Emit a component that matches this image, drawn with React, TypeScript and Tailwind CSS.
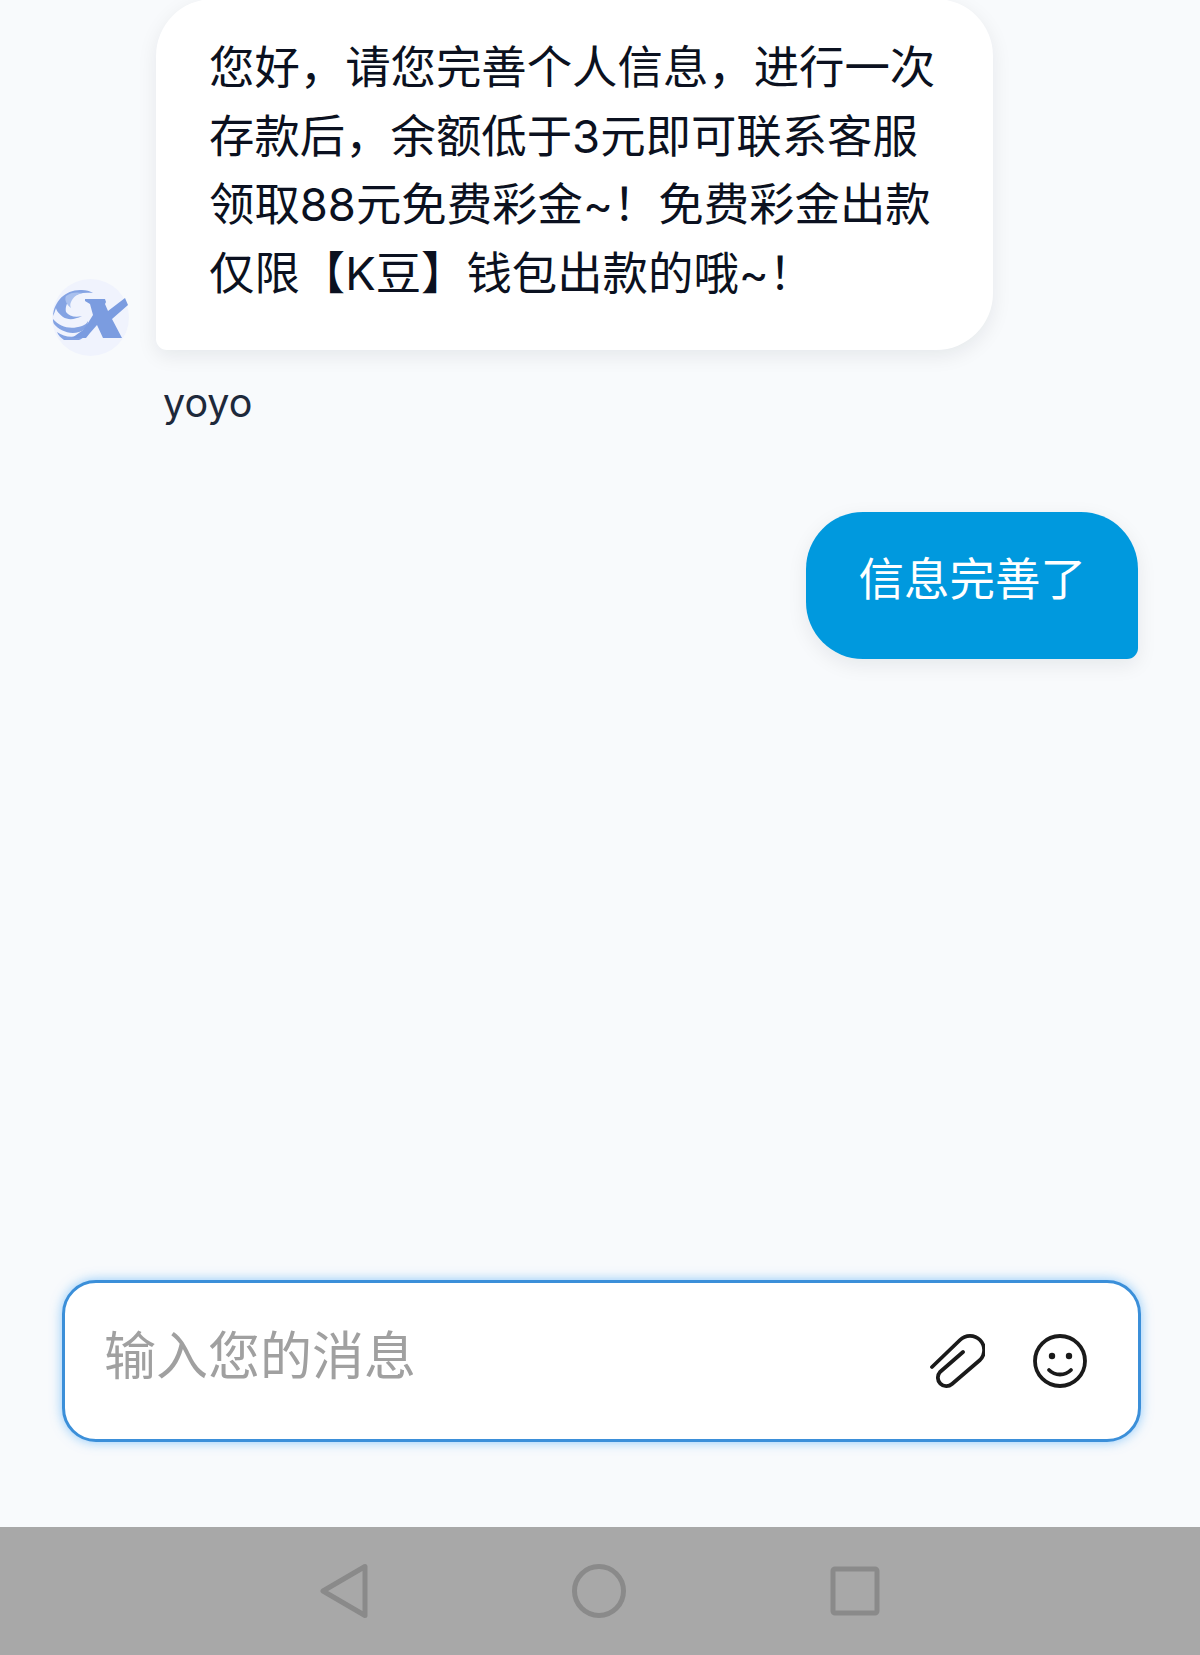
function Logo() {
  return (
    <svg viewBox="0 0 77 77" className="-mb-[6px] h-[77px] w-[77px] shrink-0" fill="none">
      <circle cx="38.5" cy="38.5" r="38.5" fill="#f0f3fd" />
      {/* wing */}
      <g fill="#84a3e3">
        <path d="M1 37C2 22 14 10 30 11c4 0 8 1 11 3-9-1-16 0-22 5-4 4-6 9-5 14 3 4 9 6 16 4-8 4-14 4-19 1-4-3-7-7-7-9-1 3-2 6-3 8z" />
        <path d="M14 17c5-4 11-4 17-3-6 1-10 4-12 9-1 2-1 4 0 6-4-3-7-8-5-12z" fill="#a9c0ee" />
        <path d="M1 40c7 8 17 11 29 7 3-1 5-3 6-5 0 5-3 9-9 11-10 3-20-2-25-8-1-2-1-3-1-5z" />
        <path d="M5 53c7 5 15 6 24 3l7-5c-1 4-4 8-9 10H12c-3-2-6-5-7-8z" />
      </g>
      {/* X */}
      <path
        d="M33 20h20l1 3-1 2 3 7 17-13 3 7-16 14 10 19H51l-6-13-7 8-4 5H20l11-8 5-7 5-8-3-11-5-3z"
        fill="#7b9ce0"
      />
    </svg>
  );
}

function ClipIcon() {
  return (
    <svg width="56" height="56" viewBox="0 0 56 56" fill="none" stroke="#1a1a1a" strokeWidth="3.8" strokeLinecap="round" strokeLinejoin="round">
      <path d="M3 34 31 7A14 14 0 0 1 51 27L23 51A8.5 8.5 0 0 1 11 39L34 19" />
    </svg>
  );
}

function SmileIcon() {
  return (
    <svg width="56" height="56" viewBox="0 0 56 56" fill="none" stroke="#1a1a1a" strokeWidth="3.8" strokeLinecap="round">
      <circle cx="28" cy="28" r="25" />
      <circle cx="20" cy="23" r="3.2" fill="#1a1a1a" stroke="none" />
      <circle cx="37" cy="23" r="3.2" fill="#1a1a1a" stroke="none" />
      <path d="M17 37c6 6 16 6 22 0" />
    </svg>
  );
}

export default function App() {
  return (
    <div
      className="flex h-[1655px] w-[1200px] flex-col overflow-hidden bg-[#f8fafc]"
      style={{ fontFamily: 'Inter, "Noto Sans CJK SC", sans-serif' }}
    >
      <div className="flex-1 pl-[52px] pr-[62px]">
        {/* incoming message */}
        <div className="flex items-end gap-[27px]">
          <Logo />
          <div className="-mt-[1px] w-[837px] rounded-t-[57px] rounded-br-[57px] rounded-bl-[11px] bg-white pt-[35px] pb-[42px] pl-[53px] pr-[40px] text-[45.4px] leading-[68.5px] text-[#0b1120] shadow-[0_6px_20px_rgba(15,23,42,0.08)]">
            您好，请您完善个人信息，进行一次存款后，余额低于3元即可联系客服领取88元免费彩金~！免费彩金出款仅限【K豆】钱包出款的哦~！
          </div>
        </div>
        <div className="ml-[111px] mt-[26px] text-[39.5px] leading-[54px] text-[#1e293b]">yoyo</div>

        {/* outgoing message */}
        <div className="mt-[82px] flex justify-end">
          <div className="rounded-t-[57px] rounded-bl-[57px] rounded-br-[11px] bg-[#0099de] px-[52px] pt-[34px] pb-[44px] text-[45.5px] leading-[68.6px] text-white shadow-[0_6px_20px_rgba(15,23,42,0.08)]">
            信息完善了
          </div>
        </div>
      </div>

      {/* input */}
      <div className="ml-[62px] mr-[59px] mb-[85px] flex h-[162px] items-center rounded-[34px] border-[3px] border-[#3b8fd9] bg-white pl-[39px] pr-[50px] shadow-[0_0_12px_rgba(96,180,250,0.7)]">
        <div className="-mt-[9px] flex-1 text-[52px] leading-[72px] text-[#a0a0a0]">输入您的消息</div>
        <div className="flex items-center gap-[47px]">
          <ClipIcon />
          <SmileIcon />
        </div>
      </div>

      {/* system nav bar */}
      <div className="flex h-[128px] items-center justify-center gap-[204px] bg-[#a8a8a8]">
        <svg width="48" height="56" viewBox="0 0 48 56" fill="none" stroke="#8a8a8a" strokeWidth="5" strokeLinejoin="round">
          <path d="M45 3.500v49L3 28z" />
        </svg>
        <svg width="54" height="54" viewBox="0 0 54 54" fill="none" stroke="#8a8a8a" strokeWidth="5">
          <circle cx="27" cy="27" r="24.500" />
        </svg>
        <svg width="50" height="50" viewBox="0 0 50 50" fill="none" stroke="#8a8a8a" strokeWidth="5" strokeLinejoin="round">
          <rect x="3" y="3" width="44" height="44" rx="2" />
        </svg>
      </div>
    </div>
  );
}
